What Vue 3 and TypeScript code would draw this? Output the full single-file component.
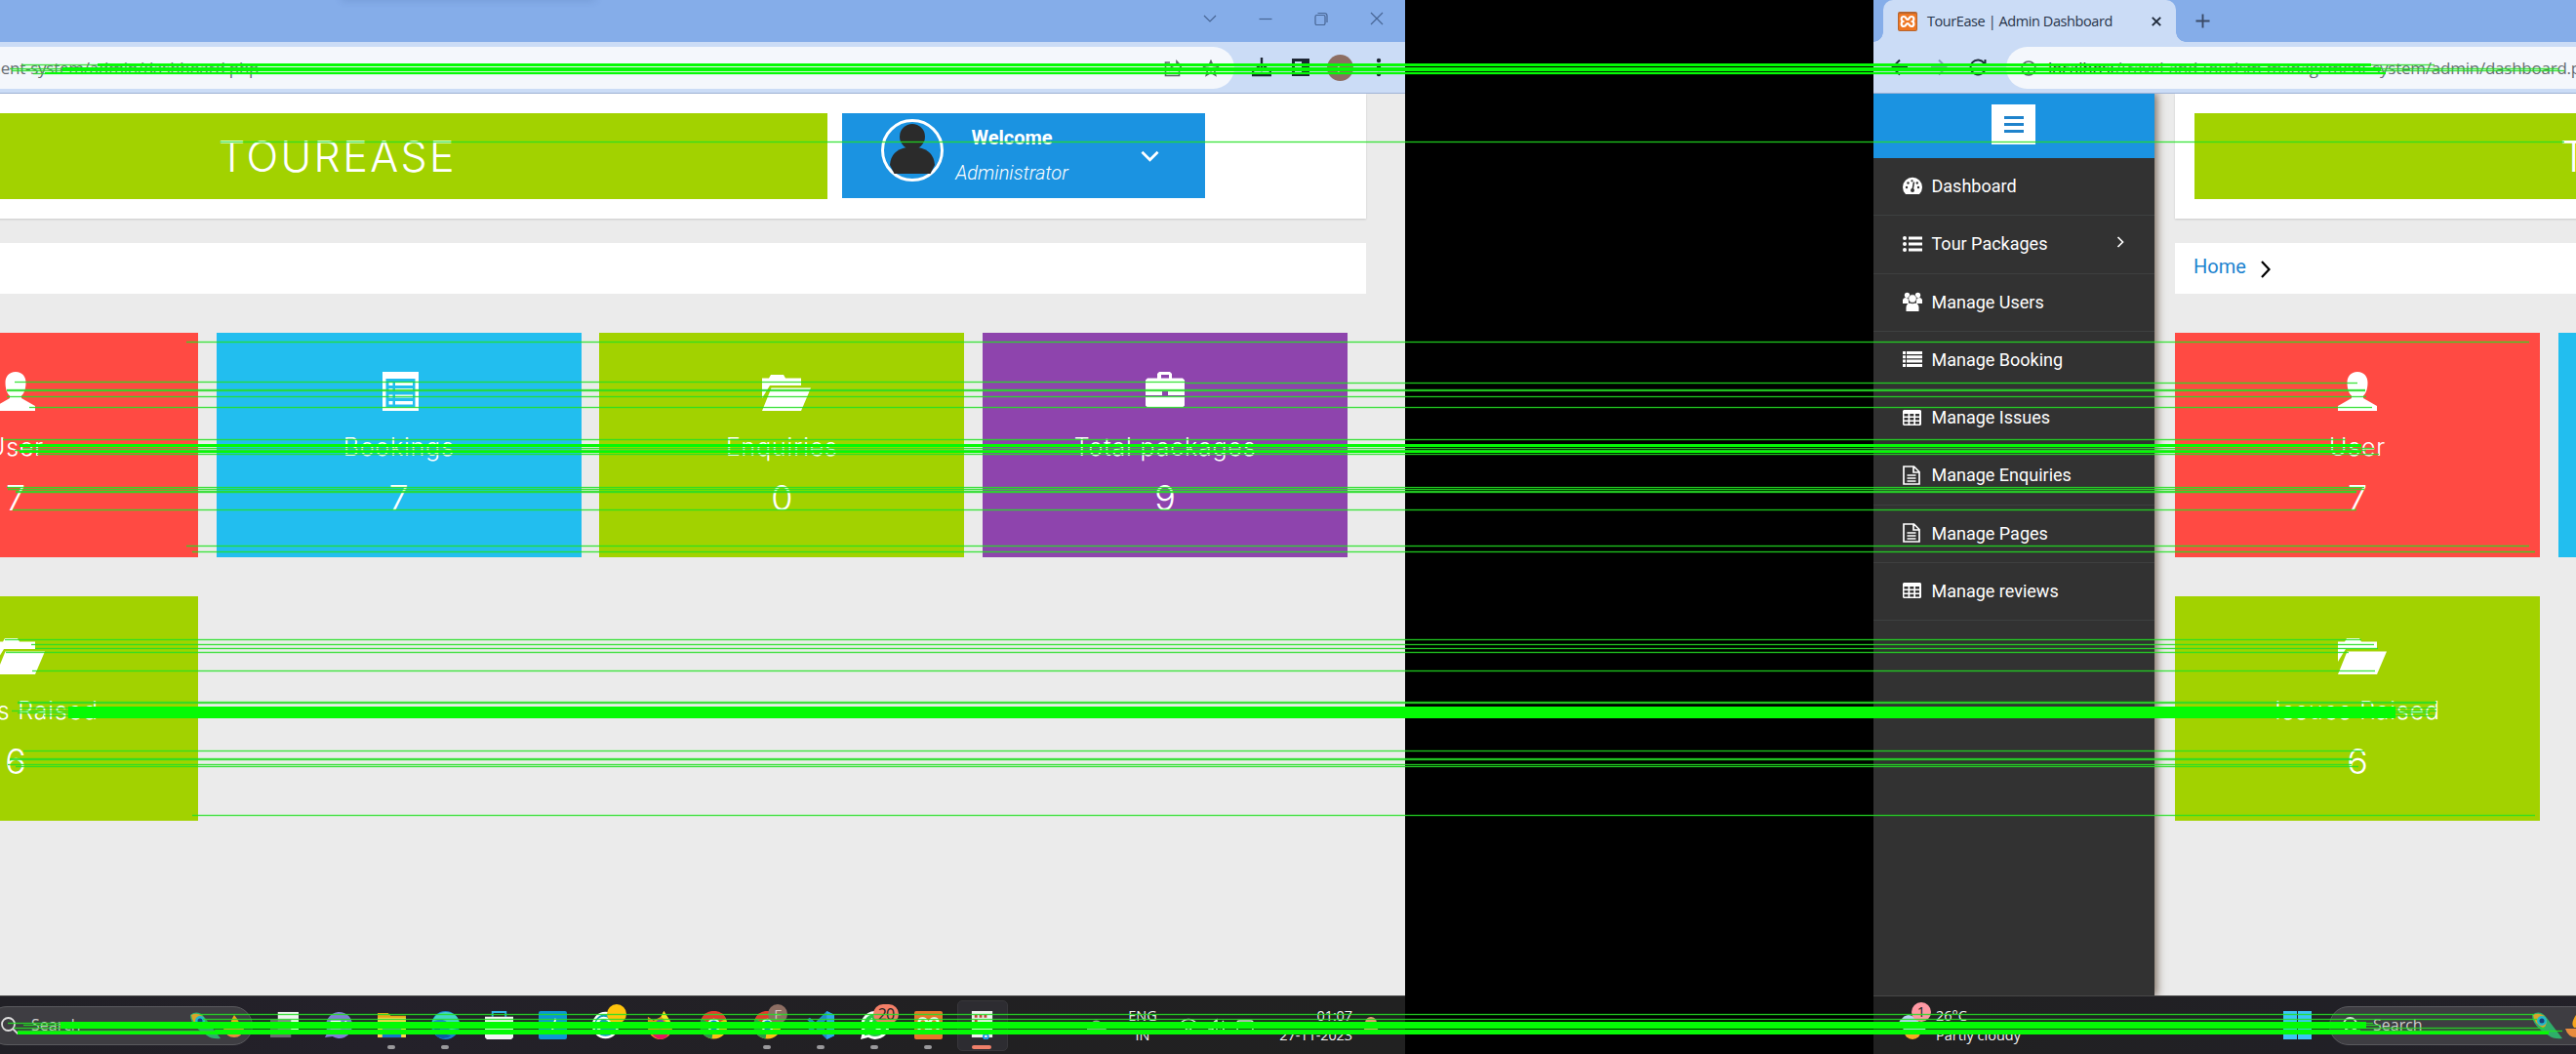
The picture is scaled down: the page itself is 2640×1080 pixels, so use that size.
<script setup lang="ts">
interface Pane { id: string; offset: number; width: number }
interface MenuItem { label: string; icon: string; arrow?: boolean }
interface Stat { label: string; value: number; icon: string; color: string }
interface TaskApp { icon: string; open?: boolean; active?: boolean; badge?: string; badgeColor?: string }
type Match = [y: number, h: number, x1: number, x2: number]

const panes: Pane[] = [
  { id: 'left', offset: -480, width: 1440 },
  { id: 'right', offset: 0, width: 720 },
]

const menu: MenuItem[] = [
  { label: 'Dashboard', icon: 'gauge' },
  { label: 'Tour Packages', icon: 'listul', arrow: true },
  { label: 'Manage Users', icon: 'users' },
  { label: 'Manage Booking', icon: 'list' },
  { label: 'Manage Issues', icon: 'table' },
  { label: 'Manage Enquiries', icon: 'file' },
  { label: 'Manage Pages', icon: 'file' },
  { label: 'Manage reviews', icon: 'table' },
]

const stats: Stat[] = [
  { label: 'User', value: 7, icon: 'user', color: '#ff4a43' },
  { label: 'Bookings', value: 7, icon: 'booking', color: '#22beef' },
  { label: 'Enquiries', value: 0, icon: 'folder', color: '#a2d200' },
  { label: 'Total packages', value: 9, icon: 'case', color: '#8e44ad' },
  { label: 'Issues Raised', value: 6, icon: 'folder', color: '#a2d200' },
]

const apps: TaskApp[] = [
  { icon: 'taskview' },
  { icon: 'chat' },
  { icon: 'explorer', open: true },
  { icon: 'edge', open: true },
  { icon: 'store' },
  { icon: 'bluebox' },
  { icon: 'ring', badge: '', badgeColor: '#ffc40c' },
  { icon: 'fox' },
  { icon: 'chrome' },
  { icon: 'chrome', open: true, badge: 'F', badgeColor: '#8d6e63' },
  { icon: 'code', open: true },
  { icon: 'phone', open: true, badge: '20', badgeColor: '#f47f68' },
  { icon: 'xampp', open: true },
  { icon: 'snip', active: true },
]

const thin: Match[] = [
  [66, 1, 22, 2495], [70, 1, 10, 2622], [72, 1, 12, 2628], [75, 1, 34, 2445],
  [145, 1, 226, 2628],
  [350, 1, 191, 2592], [391, 1, 15, 1215], [392, 1, 1215, 2416], [399, 2, 7, 2424], [406, 1, 7, 2425], [417, 1, 30, 2431],
  [450, 1, 3, 2404], [459, 1, 23, 2433], [461, 1, 15, 2425], [465, 1, 38, 2438],
  [499, 1, 7, 2423], [501, 1, 8, 2423], [503, 2, 16, 2415], [522, 1, 13, 2415],
  [559, 1, 191, 2592], [565, 1, 197, 2598],
  [655, 1, 5, 2420], [660, 1, 32, 2433], [664, 1, 36, 2437], [668, 1, 6, 2407], [687, 1, 33, 2434],
  [719, 2, 18, 2497], [725, 1, 20, 2497], [728, 1, 12, 2497], [730, 1, 18, 2490], [733, 1, 45, 2495],
  [769, 1, 24, 2423], [777, 2, 10, 2411], [783, 1, 8, 2410], [785, 1, 16, 2417], [835, 1, 197, 2598],
  [1039, 1, 205, 2597], [1044, 1, 208, 2600], [1048, 1, 8, 2432], [1050, 1, 24, 2440], [1053, 1, 14, 2608], [1056, 1, 18, 2626],
]
const thick: Match[] = [
  [65, 3, 100, 2430], [69, 4, 64, 2440], [74, 2, 46, 2445],
  [455, 3, 20, 2420], [462, 2, 20, 2420],
  [724, 12, 70, 2455],
  [1047, 7, 62, 2425], [1055, 5, 220, 2419], [1057, 3, 18, 2612],
]
</script>

<template>
  <div class="board">
    <div v-for="p in panes" :key="p.id" class="pane" :style="{ width: p.width + 'px' }">
      <div class="screen" :style="{ marginLeft: p.offset + 'px' }">
        <header class="tabs">
          <div class="tab">
            <svg class="fav" viewBox="0 0 20 20"><rect width="20" height="20" rx="2" fill="#b8652e" /><rect x="1" y="2" width="18" height="17" rx="1" fill="#ee7623" /><path d="M6 5c-3 0-3 4-1 5-2 1-2 5 1 5s2-3 4-3 1 3 4 3 3-4 1-5c2-1 2-5-1-5s-2 3-4 3-1-3-4-3z" fill="none" stroke="#fff" stroke-width="2.2" /></svg>
            <span class="tabname">TourEase | Admin Dashboard</span>
            <svg class="tabx" viewBox="0 0 10 10"><path d="M.8.8l8.4 8.4M9.200.8L.8 9.200" stroke="#1f2a3a" stroke-width="1.9" /></svg>
          </div>
          <svg class="plus" viewBox="0 0 16 16"><path d="M8 .5v15M.5 8h15" stroke="#3a4a66" stroke-width="2" /></svg>
          <div class="peek"></div>
          <div class="winctl">
            <svg viewBox="0 0 14 14"><path d="M1 4l6 6 6-6" /></svg>
            <svg viewBox="0 0 14 14"><path d="M.5 7.500h13" /></svg>
            <svg viewBox="0 0 14 14"><rect x="1" y="3.500" width="10" height="10" rx="1.500" /><path d="M3.500 1.500h7a2.500 2.500 0 0 1 2.500 2.500v7" /></svg>
            <svg viewBox="0 0 14 14"><path d="M1 1l12 12M13 1L1 13" /></svg>
          </div>
        </header>

        <div class="toolbar">
          <svg class="nav" viewBox="0 0 18 18"><path d="M17 9H2M9 1.500L1.500 9 9 16.500" stroke="#1f2a3a" /></svg>
          <svg class="nav" viewBox="0 0 18 18"><path d="M1 9h15M9 1.500L16.500 9 9 16.500" stroke="#8798b8" /></svg>
          <svg class="nav" viewBox="0 0 18 18"><path d="M15.500 5A7.500 7.500 0 1 0 16.500 10M16.500 1v5.500H11" stroke="#1f2a3a" /></svg>
          <div class="omni">
            <svg class="info" viewBox="0 0 16 16"><circle cx="8" cy="8" r="7" fill="none" stroke="#5f6368" stroke-width="1.700" /><path d="M8 7v5M8 4v1.500" stroke="#5f6368" stroke-width="1.700" /></svg>
            <span class="url"><b>localhost</b>/travel-and-tourism-management-system/admin/dashboard.php</span>
            <svg class="share" viewBox="0 0 18 18"><path d="M6 3H1.500v13.500h14V12M5 12c1-5 4-6 8-6V2l4.500 5L13 11" /></svg>
            <svg class="star" viewBox="0 0 18 18"><path d="M9 1.500l2.200 5 5.300.500-4 3.600 1.200 5.400L9 13.200 4.300 16l1.200-5.400-4-3.600 5.300-.5z" /></svg>
          </div>
          <svg class="dl first" viewBox="0 0 20 20"><path d="M10 0v12M5 8l5 5 5-5" fill="none" stroke="#1d2633" stroke-width="2.400" /><path d="M1 13v5h18v-5" fill="none" stroke="#1d2633" stroke-width="2.600" /></svg>
          <svg class="dl" viewBox="0 0 20 20"><path d="M1 1h18v18H1zM4 4v12h7V4z" fill="#1d2633" fill-rule="evenodd" /></svg>
          <div class="me">F</div>
          <svg class="dots" viewBox="0 0 6 20"><circle cx="3" cy="3" r="2.200" /><circle cx="3" cy="10" r="2.200" /><circle cx="3" cy="17" r="2.200" /></svg>
        </div>

        <div class="page">
          <aside class="side">
            <div class="burger"><div class="bbtn"><i></i><i></i><i></i></div></div>
            <div v-for="m in menu" :key="m.label" class="item">
              <svg class="mico" viewBox="0 0 20 20">
                <template v-if="m.icon === 'gauge'"><path d="M3 18a10 10 0 1 1 14 0z" fill="#fff" /><path d="M11.500 5.500L10 14" stroke="#333" stroke-width="1.500" /><g fill="#333"><circle cx="10" cy="14" r="2" /><circle cx="4" cy="11" r="1.200" /><circle cx="5.500" cy="6.500" r="1.200" /><circle cx="16" cy="11" r="1.200" /><circle cx="14.800" cy="6.500" r="1.200" /><circle cx="9.500" cy="4.300" r="1.100" /></g></template>
                <g v-else-if="m.icon === 'listul'" fill="#fff"><circle cx="2" cy="4" r="2" /><circle cx="2" cy="10" r="2" /><circle cx="2" cy="16" r="2" /><path d="M6 2.500h14v3H6zM6 8.500h14v3H6zM6 14.500h14v3H6z" /></g>
                <g v-else-if="m.icon === 'users'" fill="#fff"><circle cx="4.500" cy="3.500" r="2.700" /><circle cx="15.500" cy="3.500" r="2.700" /><path d="M0 12V8q1-2 3-2l3 1v5zM20 12V8q-1-2-3-2l-3 1v5z" /><circle cx="10" cy="7" r="4.200" stroke="#333" stroke-width=".6" /><path d="M3.500 20q-1-8 3.500-8.500 3 1.500 6 0 4.500.5 3.500 8.500z" /></g>
                <path v-else-if="m.icon === 'list'" d="M0 2h3v3H0zM4 2h16v3H4zM0 6.300h3v3H0zM4 6.300h16v3H4zM0 10.600h3v3H0zM4 10.600h16v3H4zM0 14.900h3v3H0zM4 14.900h16v3H4z" fill="#fff" />
                <path v-else-if="m.icon === 'table'" d="M1 2h17l1 1v14l-1 1H1l-1-1V3zM1.500 6v2.600h4V6zM7.300 6v2.600h4V6zM13 6v2.600h4V6zM1.500 10v2.600h4V10zM7.300 10v2.600h4V10zM13 10v2.600h4V10zM1.500 14v2.500h4V14zM7.300 14v2.500h4V14zM13 14v2.500h4V14z" fill="#fff" fill-rule="evenodd" />
                <path v-else d="M1 1h10.500L17 6.500V19H1zM11 1v6h6M4.500 10h9M4.500 13h9M4.500 16h9" fill="none" stroke="#fff" stroke-width="1.700" />
              </svg>
              <span>{{ m.label }}</span>
              <svg v-if="m.arrow" class="marrow" viewBox="0 0 8 12"><path d="M1.500 1l5 5-5 5" fill="none" stroke="#fff" stroke-width="1.700" /></svg>
            </div>
          </aside>

          <main class="content">
            <div class="top">
              <div class="brand"><span>TOUREASE</span></div>
              <div class="profile">
                <svg class="avatar" viewBox="0 0 64 64"><circle cx="32" cy="32" r="30.500" fill="#1b93e1" stroke="#fff" stroke-width="3" /><ellipse cx="32" cy="18" rx="13" ry="13" fill="#2b2b2b" /><path d="M13.500 56l-4.500-9q1-15 17-18h12q16 3 17 18l-4.500 9z" fill="#2b2b2b" /></svg>
                <div class="who"><strong>Welcome</strong><em>Administrator</em></div>
                <svg class="down" viewBox="0 0 20 12"><path d="M1.500 1.500l8.500 8.500 8.500-8.500" fill="none" stroke="#fff" stroke-width="2.800" /></svg>
              </div>
            </div>
            <div class="crumb"><span>Home</span><svg viewBox="0 0 10 18"><path d="M1 1l7.500 8L1 17" fill="none" stroke="#000" stroke-width="2.200" /></svg></div>
            <div class="grid">
              <div v-for="s in stats" :key="s.label" class="card" :style="{ background: s.color }">
                <svg class="cico" viewBox="0 0 50 40">
                  <path v-if="s.icon === 'user'" d="M25 0c7 0 10.500 5 10.500 11 0 6-1.500 11-4.500 13.500v2.500l14 8v5H5v-5l14-8v-2.500c-3-2.500-4.500-7.500-4.500-13.500C14.500 5 18 0 25 0z" />
                  <path v-else-if="s.icon === 'booking'" fill-rule="evenodd" d="M8 0h37v40H8zM11.500 7v29.500h30V7zM14.500 11h4v3h-4zM21 11h18v3H21zM14.500 17h4v3h-4zM21 17h18v3H21zM14.500 23.500h4v3h-4zM21 23.500h18v3H21zM14.500 30h4v3.500h-4zM21 30h18v3.500H21z" />
                  <path v-else-if="s.icon === 'folder'" d="M5 6.500h7l2-3.500h13l2 3.500h16V14H13L5 27zM14.500 16.500H55L45 40H5z" />
                  <path v-else fill-rule="evenodd" d="M17 6.500V2l2-2h11l2 2v4.500h11l2 2V24H28v-4h-6v4H5V8.500l2-2zM21 3v3.500h8V3zM5 25h40v9.500l-2 2H7l-2-2z" />
                </svg>
                <span class="clabel">{{ s.label }}</span>
                <span class="cval">{{ s.value }}</span>
              </div>
            </div>
          </main>
        </div>

        <footer class="taskbar">
          <div class="weather">
            <svg viewBox="0 0 34 34"><circle cx="15" cy="22" r="9" fill="#f7a823" /><path d="M4 19a5 5 0 0 1 0-9 8 8 0 0 1 12-2l12 10q2 5-4 5H8z" fill="#bcd0f5" /></svg>
            <b class="wb">1</b>
            <div class="wtext"><span>26°C</span><span>Partly cloudy</span></div>
          </div>
          <svg class="start" viewBox="0 0 29 29"><path d="M0 0h14v14H0zM15 0h14v14H15zM0 15h14v14H0zM15 15h14v14H15z" fill="#3cc4f7" /></svg>
          <div class="search">
            <svg class="mag" viewBox="0 0 18 18"><circle cx="7.500" cy="7.500" r="6.500" /><path d="M12.500 12.500l5 5" /></svg>
            <span>Search</span>
            <svg class="feather" viewBox="0 0 56 28"><path d="M0 3q8-6 15 3 6 8 16 21-9 1-14-3Q0 14 0 3z" fill="#2fae6a" /><path d="M1 3q9-4 14 5 0 7-4 8Q2 12 1 3z" fill="#d7a52a" /><circle cx="10" cy="9" r="5" fill="#22b8c8" /><circle cx="10" cy="9" r="2.500" fill="#17407a" /><path d="M45 3q-6 9-2 13h7q2-5-5-13z" fill="#f6a51c" /><path d="M34 17h21q-2 9-10 9t-11-9z" fill="#e88b3c" /></svg>
          </div>
          <div class="apps">
            <div v-for="(a, i) in apps" :key="i" class="app" :class="{ active: a.active }">
              <svg class="aico" viewBox="0 0 30 30">
                <g v-if="a.icon === 'taskview'"><path d="M8 1h22v21H8z" fill="#f2f2f2" /><path d="M0 9h22v19H0z" fill="#77777a" opacity=".85" /></g>
                <g v-else-if="a.icon === 'chat'"><path d="M15 1a14 14 0 1 1-6 26l-8 1 3-6A14 14 0 0 1 15 1z" fill="#7f7fd5" /><path d="M7 10h11v9H7zM20 12l4-2v9l-4-2z" fill="#fff" /></g>
                <g v-else-if="a.icon === 'explorer'"><path d="M0 2h11l3 3h16v23H0z" fill="#e8a317" /><path d="M0 7h30v21H0z" fill="#ffd34e" /><path d="M5 19h20v9H5z" fill="#1477c9" /></g>
                <g v-else-if="a.icon === 'edge'"><circle cx="15" cy="15" r="15" fill="#1b7fd0" /><path d="M1 12C4-4 30-2 30 14c0 6-10 7-12 4 3-8-10-12-17-6z" fill="#45d3c8" /><path d="M9 12q-3 12 12 14-9 6-16 0-5-7 4-14z" fill="#0c59a4" /></g>
                <g v-else-if="a.icon === 'store'"><path d="M8 6V1h14v5" fill="none" stroke="#34b4e8" stroke-width="2" /><path d="M0 6h30v22l-2 2H2l-2-2z" fill="#f4f4f4" /><path d="M8 13h6v5H8z" fill="#f25022" /><path d="M16 13h6v5h-6z" fill="#7fba00" /><path d="M8 20h6v4H8z" fill="#00a4ef" /><path d="M16 20h6v4h-6z" fill="#ffb900" /></g>
                <g v-else-if="a.icon === 'bluebox'"><rect width="30" height="30" rx="2" fill="#0d96d4" /><path d="M18 8l-4 14" stroke="#fff" stroke-width="2" /></g>
                <g v-else-if="a.icon === 'ring'"><circle cx="14" cy="15" r="13" fill="#159bb8" stroke="#fff" stroke-width="2.500" /><path d="M8 20a7 7 0 1 1 11-4H9" fill="none" stroke="#fff" stroke-width="3" /></g>
                <g v-else-if="a.icon === 'fox'"><path d="M2 6l6 4 8-4 3-6 5 8q4 5 4 9a13 13 0 0 1-26 0z" fill="#f58a1f" /><path d="M16 6l3-6 5 8q3 4 2 9-5-7-10-11z" fill="#ffe226" /><path d="M5 21q10 6 21-1-3 10-11 10-7-1-10-9z" fill="#e3175c" /><circle cx="15" cy="14" r="5" fill="#7a3fb5" /></g>
                <g v-else-if="a.icon === 'chrome'"><circle cx="15" cy="15" r="14.500" fill="#fbc116" /><path d="M15 15L2 8a14.500 14.500 0 0 1 26 0z" fill="#e33b2e" /><path d="M2 8l13 7-2 14.500A14.500 14.500 0 0 1 2 8z" fill="#2a9b46" /><circle cx="15" cy="15" r="7" fill="#fff" /><circle cx="15" cy="15" r="5.300" fill="#1a73e8" /></g>
                <g v-else-if="a.icon === 'code'"><path d="M21 0l8 4v22l-8 4L9 18l-6 5-3-2 6-6-6-6 3-2 6 5zM21 9l-7 6 7 6z" fill="#2489ca" fill-rule="evenodd" /><path d="M21 0l8 4v22l-8 4z" fill="#2fa4ee" /></g>
                <g v-else-if="a.icon === 'phone'"><path d="M15 0a15 15 0 1 1-7 28l-8 2 2-8A15 15 0 0 1 15 0z" fill="#fff" /><path d="M15 3a12 12 0 1 1-6 22l-5 1 1-5A12 12 0 0 1 15 3z" fill="#2cc24c" /><path d="M10 9q-2 4 3 8t8 3l1-3-4-2-2 1q-3-2-4-4l1-2-1-3z" fill="#fff" /></g>
                <g v-else-if="a.icon === 'xampp'"><rect width="30" height="30" rx="2" fill="#e8762a" /><path d="M9 8c-5 0-5 6-1 7-4 1-4 7 1 7s3-4 6-4 1 4 6 4 5-6 1-7c4-1 4-7-1-7s-3 4-6 4-1-4-6-4z" fill="none" stroke="#fff" stroke-width="3" /></g>
                <g v-else><path d="M4 0h22v28H4z" fill="#f0f0f0" /><path d="M7 4h3v3H7zM12 4h3v3h-3zM17 4h3v3h-3zM7 9h3v3H7z" fill="#c4453a" /><circle cx="19" cy="27" r="2.500" fill="none" stroke="#1c9be8" stroke-width="2" /></g>
              </svg>
              <b v-if="a.badgeColor" class="badge" :class="{ wide: a.badge === '20', pale: a.badge === 'F' }" :style="{ background: a.badgeColor }">{{ a.badge }}</b>
              <i v-if="a.open || a.active" class="ind"></i>
            </div>
          </div>
          <div class="tray">
            <svg class="tup" viewBox="0 0 10 6"><path d="M1 5l4-4 4 4" /></svg>
            <svg class="tcloud" viewBox="0 0 20 14"><path d="M3 13a4 4 0 0 1 1-8 6 6 0 0 1 11 0 4 4 0 0 1 2 8z" fill="#9a9a9a" /></svg>
            <div class="lang"><span>ENG</span><span>IN</span></div>
            <svg class="wifi" viewBox="0 0 20 16"><path d="M1 6q9-9 18 0M4 9q6-6 12 0M7 12q3-3 6 0" /></svg>
            <svg class="wifi vol" viewBox="0 0 20 16"><path d="M1 6h3l5-4v13l-5-4H1zM12 5q2 3 0 6M15 3q4 5 0 10" /></svg>
            <svg class="wifi bat" viewBox="0 0 20 16"><rect x="1" y="3" width="16" height="10" rx="2" /><path d="M19 6v4" /></svg>
            <div class="clock"><span>01:07</span><span>27-11-2023</span></div>
            <svg class="bell" viewBox="0 0 18 20"><path d="M9 1a6 6 0 0 1 6 6v5l2 3H1l2-3V7a6 6 0 0 1 6-6z" fill="#f2937a" /></svg>
          </div>
        </footer>
      </div>
    </div>

    <svg class="matches" width="2640" height="1080" viewBox="0 0 2640 1080" shape-rendering="crispEdges">
      <rect v-for="(m, i) in thin" :key="'h' + i" :x="m[2]" :y="m[0] - 1" :width="m[3] - m[2]" :height="m[1] + 2" fill="#00ff00" fill-opacity=".14" />
      <rect v-for="(m, i) in thin" :key="'t' + i" :x="m[2]" :y="m[0]" :width="m[3] - m[2]" :height="m[1]" fill="#28dc28" fill-opacity=".85" />
      <rect v-for="(m, i) in thick" :key="'k' + i" :x="m[2]" :y="m[0]" :width="m[3] - m[2]" :height="m[1]" fill="#05fa05" />
    </svg>
  </div>
</template>

<style>
body { background: #000; }
</style>

<style scoped>
* { box-sizing: border-box; }
svg { display: block; flex: none; }
.board { position: relative; width: 2640px; height: 1080px; display: flex; justify-content: space-between; background: #000; overflow: hidden; font-family: Roboto, sans-serif; }
.pane { height: 1080px; overflow: hidden; flex: none; }
.screen { width: 1920px; height: 1080px; display: flex; flex-direction: column; }
.matches { position: absolute; left: 0; top: 0; }

.tabs { position: relative; height: 43px; flex: none; background: #85ade9; display: flex; align-items: center; padding-left: 10px; }
.tab { position: relative; width: 300px; height: 43px; flex: none; background: #cbdcf6; border-radius: 10px 10px 0 0; display: flex; align-items: center; padding-left: 15px; }
.tab::before, .tab::after { content: ''; position: absolute; bottom: 0; width: 10px; height: 10px; }
.tab::before { left: -10px; background: radial-gradient(circle at 0 0, transparent 9.5px, #cbdcf6 10px); }
.tab::after { right: -10px; background: radial-gradient(circle at 100% 0, transparent 9.5px, #cbdcf6 10px); }
.fav { width: 20px; height: 20px; }
.tabname { margin-left: 10px; width: 230px; padding-bottom: 1px; font: 14.5px "Open Sans", sans-serif; color: #27344a; white-space: nowrap; letter-spacing: -.42px; }
.tabx { width: 10px; height: 10px; }
.plus { width: 15px; height: 15px; margin-left: 20px; }
.peek { position: absolute; left: 830px; top: -10px; width: 260px; height: 10px; box-shadow: 0 0 8px rgba(40, 70, 130, .2); }
.winctl { margin-left: auto; display: flex; gap: 43px; padding: 0 22px 6px 0; }
.winctl svg { width: 14px; height: 14px; fill: none; stroke: #486695; stroke-width: 1.2; }

.toolbar { height: 53px; flex: none; background: #cbdcf6; border-bottom: 1px solid #9fb3d6; display: flex; align-items: center; padding: 0 24px 0 18px; }
.nav { width: 18px; height: 18px; margin-right: 22px; fill: none; stroke-width: 2; }
.omni { width: 1609px; height: 43px; margin-top: 1px; margin-left: -2px; border-radius: 22px; background: #f4f7fc; display: flex; align-items: center; padding: 0 15px; }
.info { width: 16px; height: 16px; }
.url { margin-left: 12px; font: 17px "Open Sans", sans-serif; color: #666b72; white-space: nowrap; letter-spacing: -.24px; }
.url b { font-weight: 400; color: #1f2328; }
.share { width: 18px; height: 18px; margin-left: auto; margin-right: 21px; fill: none; stroke: #5f6368; stroke-width: 1.6; }
.star { width: 18px; height: 18px; fill: none; stroke: #5f6368; stroke-width: 1.6; }
.dl { width: 20px; height: 20px; margin-left: 20px; }
.dl.first { margin-left: 18px; }
.me { width: 27px; height: 27px; margin-left: 17px; border-radius: 50%; background: #8d6e63; color: #e9dcd7; font: 15px/27px "Open Sans", sans-serif; text-align: center; }
.dots { width: 6px; height: 20px; margin-left: auto; fill: #1d2633; }

.page { height: 924px; flex: none; background: #ebebeb; display: flex; }
.side { width: 288px; flex: none; height: 924px; background: #323232; box-shadow: 1px 0 9px 1px rgba(72, 50, 30, .75); clip-path: inset(0 -20px 0 0); }
.burger { height: 66px; background: #1b93e1; display: flex; padding: 11px 0 0 121px; }
.bbtn { width: 45px; height: 41px; background: #fff; display: flex; flex-direction: column; align-items: center; gap: 4px; padding-top: 12px; }
.bbtn i { width: 20px; height: 3px; background: #1f83cc; }
.item { height: 59.25px; display: flex; align-items: center; padding: 0 0 1px 30px; border-bottom: 1px solid #3e4040; color: #fff; font-size: 18px; white-space: nowrap; }
.item span { margin-left: 9.5px; }
.mico { width: 20px; height: 20px; }
.marrow { width: 8px; height: 12px; margin-left: auto; margin-right: 31px; margin-bottom: 4px; }

.content { margin-left: 21px; width: 1571px; }
.top { height: 128px; background: #fff; box-shadow: 0 1px 2px rgba(0, 0, 0, .14); display: flex; padding: 20px 0 0 20px; }
.brand { width: 999px; height: 88px; background: #a2d200; display: flex; align-items: center; padding: 0 0 1px 375px; color: #fff; font: 350 43px Inter, sans-serif; letter-spacing: 2.4px; }
.profile { margin-left: 15px; width: 372px; height: 87px; background: #1b93e1; display: flex; padding-left: 40px; color: #fff; }
.avatar { width: 64px; height: 64px; margin-top: 6px; }
.who { margin-left: 8px; width: 124px; display: flex; flex-direction: column; align-items: center; padding-top: 13px; font-size: 20px; line-height: 24px; white-space: nowrap; }
.who strong { font-weight: 700; }
.who em { font-weight: 300; margin-top: 12px; }
.down { width: 19px; height: 12px; margin: 38px 0 0 70px; }
.crumb { margin-top: 25px; height: 52px; background: #fff; display: flex; align-items: center; padding-left: 19px; color: #1c83cf; font-size: 20px; }
.crumb span { width: 69px; padding-bottom: 5px; }
.crumb svg { width: 10px; height: 18px; margin-top: 2px; }
.grid { margin-top: 40px; display: grid; grid-template-columns: repeat(4, 374px); column-gap: 18.7px; row-gap: 40px; }
.card { height: 230px; padding-top: 40px; display: flex; flex-direction: column; align-items: center; color: #fff; font-family: Inter, sans-serif; white-space: nowrap; }
.cico { width: 50px; height: 40px; fill: #fff; overflow: visible; }
.clabel { margin-top: 20px; font-size: 25px; line-height: 34px; font-weight: 350; letter-spacing: .8px; }
.cval { margin-top: 13px; font-size: 36px; line-height: 44px; font-weight: 350; }

.taskbar { height: 60px; flex: none; background: linear-gradient(90deg, #212121 0, #212026 25%, #24212a 45%, #212022 75%, #212121); border-top: 1px solid #474747; display: flex; align-items: center; color: #f0f0f0; font: 14.5px "Open Sans", sans-serif; white-space: nowrap; }
.weather { position: relative; width: 395px; margin-left: 25px; display: flex; align-items: center; }
.weather svg { width: 34px; height: 34px; }
.wb { position: absolute; left: 14px; top: -4px; width: 20px; height: 20px; border-radius: 50%; background: #ff99a4; color: #222; font-weight: 400; line-height: 20px; text-align: center; }
.wtext { margin-left: 5px; display: flex; flex-direction: column; line-height: 20px; }
.start { width: 29px; height: 29px; }
.search { width: 272px; height: 40px; margin-left: 18px; border: 1px solid #5a5a5e; border-radius: 20px; background: #3e3d42; display: flex; align-items: center; padding-left: 13px; font-size: 16px; color: #ccc; }
.mag { width: 18px; height: 18px; fill: none; stroke: #ddd; stroke-width: 1.8; margin-right: 13px; }
.search span { width: 163px; padding-bottom: 2px; }
.feather { width: 56px; height: 28px; }
.apps { margin-left: 5px; display: flex; }
.app { position: relative; width: 55px; height: 59px; display: flex; align-items: center; justify-content: center; }
.active::before { content: ''; position: absolute; left: 2px; top: 4px; width: 50px; height: 50px; border: 1px solid #38373b; border-radius: 5px; background: #2d2c31; }
.aico { position: relative; width: 29px; height: 29px; }
.badge { position: absolute; left: 28px; top: 8px; width: 20px; height: 20px; border-radius: 10px; text-align: center; color: #222; font-weight: 400; line-height: 20px; font-size: 15px; }
.badge.wide { left: 26px; width: 26px; font-size: 16px; letter-spacing: -1px; }
.badge.pale { color: #d8c6bf; }
.ind { position: absolute; left: 23px; bottom: 5px; width: 8px; height: 4px; border-radius: 2px; background: #9a999c; }
.active .ind { left: 17px; width: 20px; background: #f0806a; }
.tray { display: flex; align-items: center; margin-left: 46px; }
.tray svg { fill: none; stroke: #e8e8e8; stroke-width: 1.5; }
.tray .tup { width: 10px; height: 6px; }
.tray .tcloud, .tray .bell { stroke: none; }
.tray .tcloud { width: 20px; height: 14px; margin-left: 24px; }
.lang { width: 40px; margin-left: 17px; display: flex; flex-direction: column; align-items: center; line-height: 20px; }
.tray .wifi { width: 20px; height: 16px; margin-left: 17px; }
.tray .vol { margin-left: 10px; }
.tray .bat { margin-left: 9px; }
.clock { width: 90px; margin-left: 9px; display: flex; flex-direction: column; align-items: flex-end; line-height: 20px; letter-spacing: -.1px; }
.tray .bell { width: 18px; height: 20px; margin-left: 10px; }
</style>
